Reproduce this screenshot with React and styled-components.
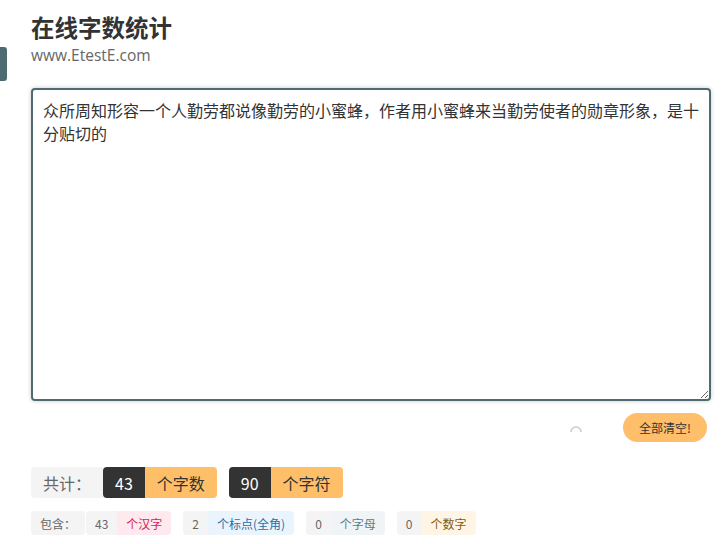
import React, { useState } from "react";
import styled, { createGlobalStyle } from "styled-components";

const Global = createGlobalStyle`
  html, body { margin: 0; padding: 0; background: #fff; }
  body { font-family: "Noto Sans", "Noto Sans CJK SC", sans-serif; color: #333; }
  * { box-sizing: border-box; }
`;

const Page = styled.div`
  padding: 12px 14px 0 31px;
  display: flex;
  flex-direction: column;
`;

const Header = styled.header`
  position: relative;
  display: flex;
  flex-direction: column;
  &::before {
    content: "";
    position: absolute;
    left: -31px;
    top: 35px;
    width: 7px;
    height: 34px;
    background: #4e6b72;
    border-radius: 0 3px 3px 0;
  }
`;

const Title = styled.h1`
  margin: 0;
  font-family: "Noto Sans CJK SC", sans-serif;
  font-size: 23.5px;
  font-weight: 700;
  line-height: 30px;
  color: #333;
`;

const Sub = styled.div`
  margin-top: 2px;
  font-family: "Open Sans", "Noto Sans", sans-serif;
  font-size: 15.5px;
  line-height: 22px;
  color: #666;
`;

const Area = styled.textarea`
  margin-top: 22px;
  width: 680px;
  height: 313px;
  border: 2px solid #4f6a71;
  border-radius: 4px;
  box-shadow: 0 0 4px rgba(0, 0, 0, 0.22);
  padding: 9px 10px;
  font-family: "Noto Sans CJK SC", sans-serif;
  font-size: 16px;
  line-height: 23px;
  color: #333;
  outline: none;
  resize: both;
`;

const Toolbar = styled.div`
  margin-top: 12px;
  display: flex;
  justify-content: flex-end;
  align-items: center;
  gap: 40px;
  width: 676px;
`;

const Spinner = styled.svg`
  width: 14px;
  height: 14px;
  margin-top: 9px;
`;

const ClearBtn = styled.button`
  height: 29px;
  padding: 0 16px;
  border: none;
  border-radius: 15px;
  background: #ffbe6a;
  color: #333;
  font-family: "Noto Sans CJK SC", sans-serif;
  font-size: 12px;
  cursor: pointer;
`;

const Row = styled.div`
  display: flex;
  align-items: center;
  gap: ${(p) => p.$gap}px;
  margin-top: ${(p) => p.$mt}px;
`;

const Group = styled.div`
  display: flex;
  gap: ${(p) => p.$gap || 0}px;
`;

const Cell = styled.span`
  display: inline-flex;
  align-items: center;
  height: ${(p) => (p.$small ? 24 : 31)}px;
  padding: 0 ${(p) => (p.$small ? 9 : 12)}px;
  font-family: "Noto Sans CJK SC", sans-serif;
  font-size: ${(p) => (p.$small ? 12 : 16)}px;
  background: ${(p) => p.$bg};
  color: ${(p) => p.$fg};
  border-radius: ${(p) => p.$r};
`;

const tones = {
  label: ["#f4f4f4", "#666"],
  dark: ["#333", "#fff"],
  orange: ["#ffbf69", "#333"],
  num: ["#f4f4f4", "#666"],
  pink: ["#fde9ee", "#d61f4b"],
  blue: ["#eaf4fd", "#2b6ea6"],
  slate: ["#f0f4f6", "#5b7b8b"],
  amber: ["#fef5e7", "#8a5b00"],
};

function Pair({ num, label, numTone, tone, small }) {
  const r = 4;
  return (
    <Group>
      <Cell $small={small} $bg={tones[numTone][0]} $fg={tones[numTone][1]} $r={`${r}px 0 0 ${r}px`}>
        {num}
      </Cell>
      <Cell $small={small} $bg={tones[tone][0]} $fg={tones[tone][1]} $r={`0 ${r}px ${r}px 0`}>
        {label}
      </Cell>
    </Group>
  );
}

export default function App() {
  const [text, setText] = useState(
    "众所周知形容一个人勤劳都说像勤劳的小蜜蜂，作者用小蜜蜂来当勤劳使者的勋章形象，是十分贴切的"
  );
  return (
    <Page>
      <Global />
      <Header>
        <Title>在线字数统计</Title>
        <Sub>www.EtestE.com</Sub>
      </Header>
      <Area value={text} onChange={(e) => setText(e.target.value)} />
      <Toolbar>
        <Spinner viewBox="0 0 14 14">
          <path d="M2 7 A5 5 0 0 1 12 7" fill="none" stroke="#d6d6d6" strokeWidth="2.2" />
        </Spinner>
        <ClearBtn onClick={() => setText("")}>全部清空!</ClearBtn>
      </Toolbar>
      <Row $gap={0} $mt={25}>
        <Cell $bg={tones.label[0]} $fg={tones.label[1]} $r="4px 0 0 4px">共计：</Cell>
        <Group $gap={12}>
          <Pair num="43" label="个字数" numTone="dark" tone="orange" />
          <Pair num="90" label="个字符" numTone="dark" tone="orange" />
        </Group>
      </Row>
      <Row $gap={12} $mt={13}>
        <Group $gap={1}>
          <Cell $small $bg={tones.label[0]} $fg={tones.label[1]} $r="4px">包含：</Cell>
          <Pair small num="43" label="个汉字" numTone="num" tone="pink" />
        </Group>
        <Pair small num="2" label="个标点(全角)" numTone="num" tone="blue" />
        <Pair small num="0" label="个字母" numTone="num" tone="slate" />
        <Pair small num="0" label="个数字" numTone="num" tone="amber" />
      </Row>
    </Page>
  );
}
